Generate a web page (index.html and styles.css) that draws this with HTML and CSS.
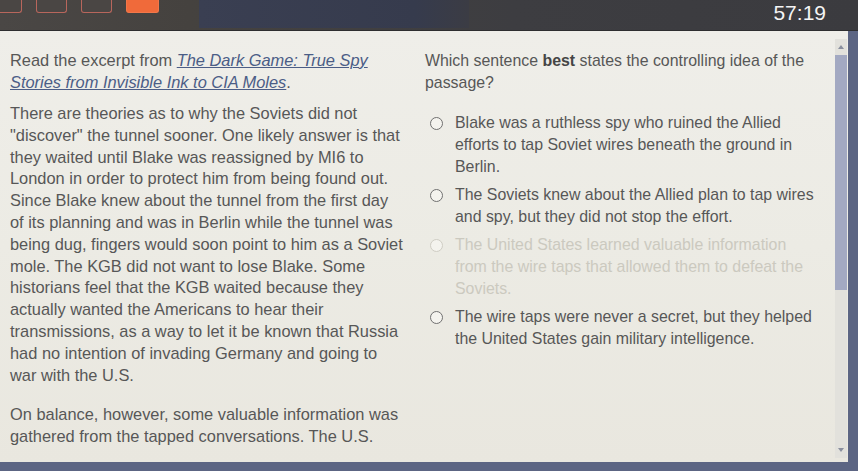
FILE: index.html
```html
<!DOCTYPE html>
<html>
<head>
<meta charset="utf-8">
<link rel="stylesheet" href="styles.css">
</head>
<body>
<div class="topbar">
  <div class="navbtns">
    <span class="nbtn first"></span>
    <span class="nbtn"></span>
    <span class="nbtn"></span>
    <span class="nbtn active"></span>
  </div>
  <div class="navy"></div>
  <div class="timer">57:19</div>
</div>
<div class="panel">
  <div class="passage">
    <p class="intro">Read the excerpt from <a class="title">The Dark Game: True Spy<br>Stories from Invisible Ink to CIA Moles</a>.</p>
    <p>There are theories as to why the Soviets did not<br>"discover" the tunnel sooner. One likely answer is that<br>they waited until Blake was reassigned by MI6 to<br>London in order to protect him from being found out.<br>Since Blake knew about the tunnel from the first day<br>of its planning and was in Berlin while the tunnel was<br>being dug, fingers would soon point to him as a Soviet<br>mole. The KGB did not want to lose Blake. Some<br>historians feel that the KGB waited because they<br>actually wanted the Americans to hear their<br>transmissions, as a way to let it be known that Russia<br>had no intention of invading Germany and going to<br>war with the U.S.</p>
    <p class="second">On balance, however, some valuable information was<br>gathered from the tapped conversations. The U.S.</p>
  </div>
  <div class="question">
    <p class="prompt">Which sentence <b>best</b> states the controlling idea of the<br>passage?</p>
    <div class="option"><span class="radio"></span><span class="otext">Blake was a ruthless spy who ruined the Allied<br>efforts to tap Soviet wires beneath the ground in<br>Berlin.</span></div>
    <div class="option"><span class="radio"></span><span class="otext">The Soviets knew about the Allied plan to tap wires<br>and spy, but they did not stop the effort.</span></div>
    <div class="option faded"><span class="radio"></span><span class="otext">The United States learned valuable information<br>from the wire taps that allowed them to defeat the<br>Soviets.</span></div>
    <div class="option"><span class="radio"></span><span class="otext">The wire taps were never a secret, but they helped<br>the United States gain military intelligence.</span></div>
  </div>
  <div class="scrollbar">
    <span class="arrow up"></span>
    <span class="thumb"></span>
    <span class="spacer"></span>
    <span class="arrow down"></span>
  </div>
</div>
</body>
</html>
```
FILE: styles.css
```css
html, body {
  margin: 0;
  padding: 0;
}
body {
  width: 858px;
  height: 471px;
  overflow: hidden;
  background: #5c6583;
  font-family: "Liberation Sans", Arial, sans-serif;
}
.topbar {
  height: 30px;
  display: flex;
  align-items: flex-start;
  background: linear-gradient(90deg, #4a4745 0%, #45423f 22%, #3d3d41 60%, #3b3b3f 100%);
  border-bottom: 1px solid #2e2e30;
}
.navbtns {
  display: flex;
  gap: 14px;
  margin-left: -8px;
  width: 207px;
}
.nbtn {
  width: 29px;
  height: 12px;
  border: 1px solid #b8665c;
  border-top: none;
  border-radius: 0 0 3px 3px;
  background: #4a4644;
}
.nbtn.first { width: 28px; }
.nbtn.active {
  background: #f06a3a;
  border-color: #f2774a;
  width: 31px;
}
.navy {
  width: 270px;
  height: 28px;
  background: linear-gradient(90deg, #3a3f52, #363b4d 80%, #3b3c44);
}
.timer {
  margin-left: auto;
  margin-right: 32px;
  margin-top: 3px;
  color: #f4f4f4;
  font-size: 21px;
  line-height: 20px;
}
.panel {
  width: 848px;
  height: 431px;
  background: linear-gradient(180deg, #efeee9 0%, #ecebe4 50%, #e9e7df 100%);
  display: flex;
  color: #575757;
  line-height: 21.8px;
  overflow: hidden;
}
.passage {
  width: 415px;
  padding: 19px 0 0 10px;
  box-sizing: border-box;
  flex: none;
  font-size: 16.4px;
}
.passage p {
  margin: 0;
  white-space: nowrap;
}
.passage .intro {
  margin-bottom: 10px;
  line-height: 21.5px;
}
.passage .second {
  margin-top: 18px;
}
.title {
  color: #4b5d86;
  font-style: italic;
  text-decoration: underline;
}
.question {
  width: 405px;
  padding: 19px 0 0 10px;
  flex: none;
  font-size: 15.9px;
}
.prompt {
  margin: 0 0 18px 0;
  white-space: nowrap;
}
.prompt b {
  color: #454545;
}
.option {
  display: flex;
  align-items: flex-start;
  margin-bottom: 6px;
  white-space: nowrap;
  line-height: 22px;
}
.radio {
  width: 11px;
  height: 11px;
  border: 1.3px solid #707070;
  border-radius: 50%;
  margin: 5px 0 0 5px;
  flex: none;
  background: #f4f3ee;
}
.otext {
  margin-left: 12px;
}
.option.faded {
  color: #cbc9bf;
}
.option.faded .radio {
  border-color: #cfcdc4;
}
.scrollbar {
  width: 12px;
  margin-left: auto;
  margin-right: 1px;
  margin-top: 8px;
  margin-bottom: 4px;
  background: #e2e1dc;
  display: flex;
  flex-direction: column;
  align-items: center;
}
.arrow {
  width: 0;
  height: 0;
  border-left: 3px solid transparent;
  border-right: 3px solid transparent;
  margin: 6px 0;
}
.arrow.up {
  border-bottom: 4px solid #8a8f9e;
}
.arrow.down {
  border-top: 4px solid #8a8f9e;
}
.thumb {
  width: 12px;
  height: 235px;
  background: #a3a9c2;
}
.spacer {
  flex: 1;
}
```
